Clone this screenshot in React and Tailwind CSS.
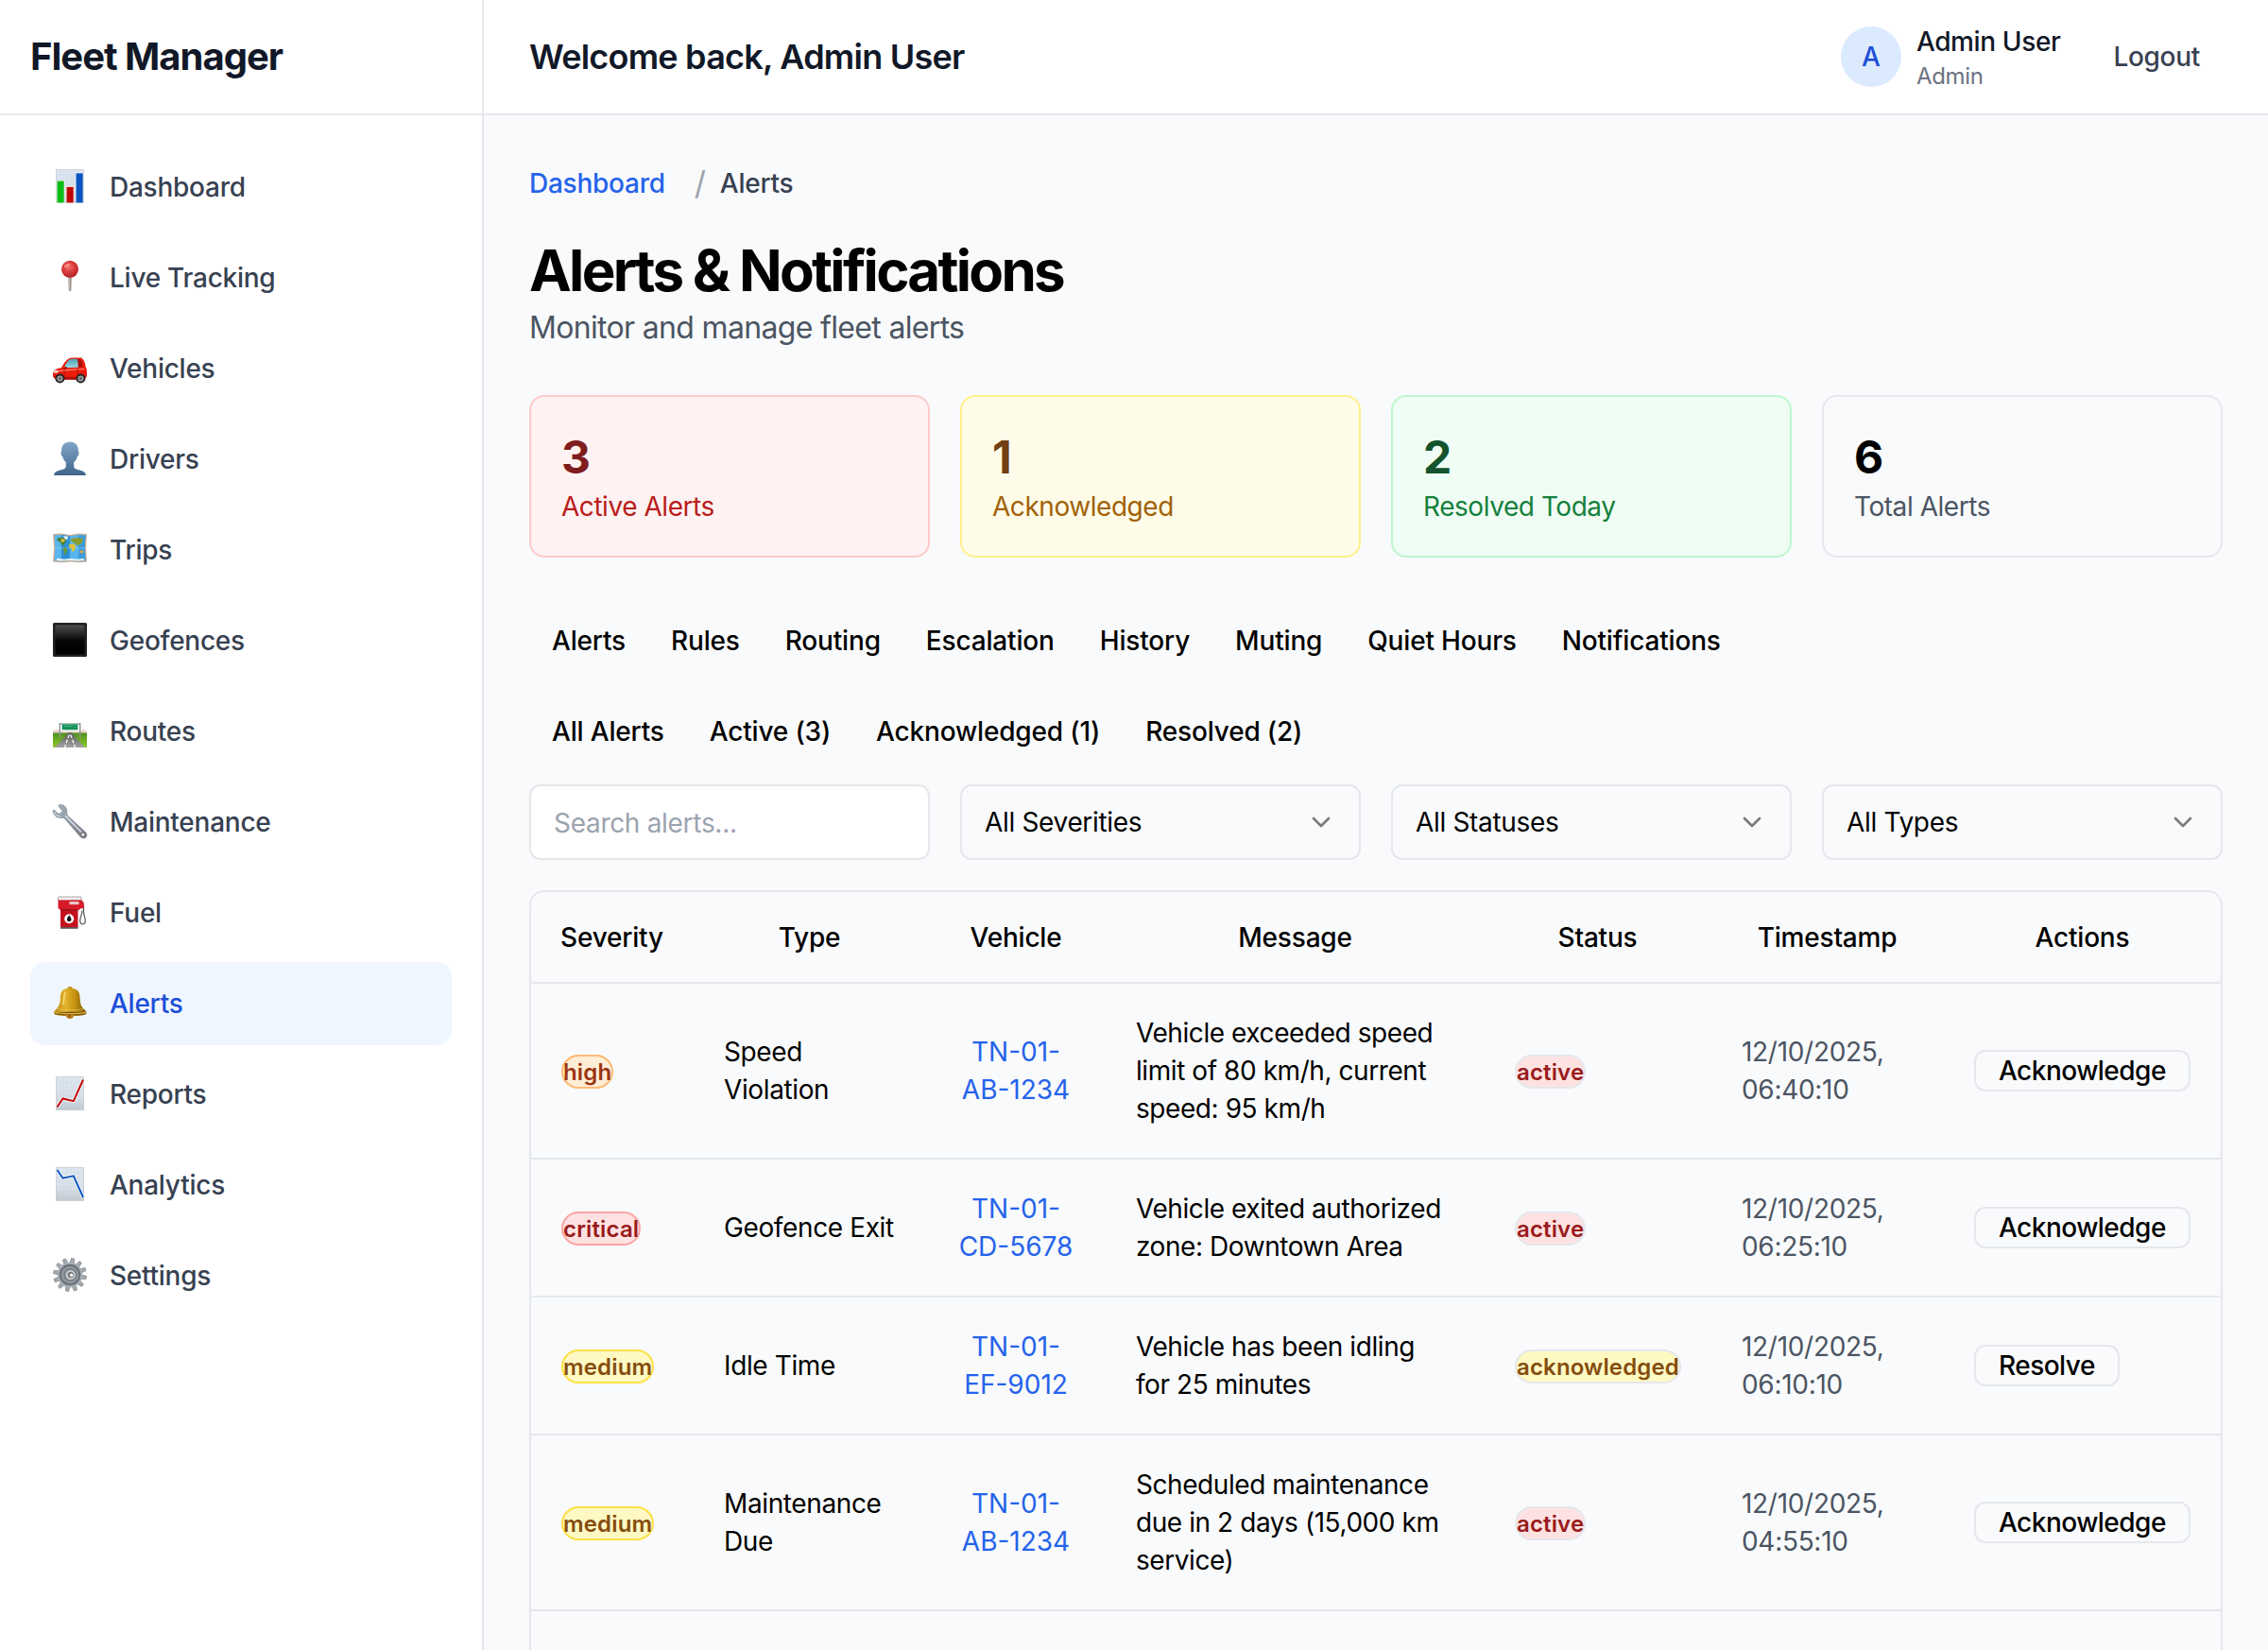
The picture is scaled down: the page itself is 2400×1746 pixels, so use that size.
import React from "react";

function Icon({ children }) {
  return (
    <svg viewBox="0 0 36 36" className="mb-0.5 h-9 w-9 shrink-0 overflow-visible">
      {children}
    </svg>
  );
}

function Paper({ id }) {
  return (
    <>
      <defs>
        <linearGradient id={id} x1="0" y1="0" x2="0" y2="1">
          <stop offset="0" stopColor="#dde7f0" />
          <stop offset="0.6" stopColor="#d9e1e9" />
          <stop offset="1" stopColor="#c3c9cf" />
        </linearGradient>
      </defs>
      <rect x="3" y="0.3" width="30" height="35.4" fill={`url(#${id})`} />
      <path d="M3.5 0.5h29v35h-29z" fill="none" stroke="#c5ccd3" strokeWidth="0.8" />
      <path d="M7 1v34M11 1v34M15 1v34M19 1v34M23 1v34M27 1v34M4 6h28M4 11h28M4 16h28M4 21h28M4 26h28M4 31h28" stroke="#b8c8d8" strokeWidth="0.3" opacity="0.6" />
    </>
  );
}

function BarChartIcon() {
  return (
    <Icon>
      <Paper id="paperBars" />
      <rect x="3.8" y="11.8" width="8.6" height="24" fill="#fff" />
      <rect x="13.8" y="18" width="8.6" height="18" fill="#fff" />
      <rect x="23.8" y="3.6" width="8.6" height="32" fill="#fff" />
      <rect x="4.5" y="12.5" width="7.2" height="23" fill="#0dbb14" />
      <rect x="14.5" y="18.8" width="7.2" height="16.7" fill="#bd0606" />
      <rect x="24.5" y="4.3" width="7.2" height="31.2" fill="#0a55c0" />
    </Icon>
  );
}

function PinIcon() {
  return (
    <Icon>
      <defs>
        <radialGradient id="pinHead" cx="0.45" cy="0.4" r="0.6">
          <stop offset="0" stopColor="#f26a62" />
          <stop offset="0.55" stopColor="#dc3a3a" />
          <stop offset="1" stopColor="#b41c22" />
        </radialGradient>
      </defs>
      <path d="M16.2 16h3.6l-.5 16.5q-1.3 1.6-2.6 0z" fill="#9c8d87" />
      <path d="M17.5 17v15" stroke="#c9bfba" strokeWidth="0.9" />
      <circle cx="18" cy="9.8" r="9" fill="url(#pinHead)" />
      <ellipse cx="15" cy="6" rx="3.4" ry="2" fill="#f79c94" opacity="0.7" transform="rotate(-30 15 6)" />
      <path d="M16.6 11h2.8v6h-2.8z" fill="#a04040" opacity="0.5" />
    </Icon>
  );
}

function CarIcon() {
  return (
    <Icon>
      <defs>
        <linearGradient id="carGlass" x1="0" y1="0" x2="0" y2="1">
          <stop offset="0" stopColor="#4f9fae" />
          <stop offset="1" stopColor="#9bdbe4" />
        </linearGradient>
      </defs>
      <path d="M29 9l1.5-2.4" stroke="#666" strokeWidth="0.8" />
      <path d="M0 25.5C0 21 3.6 18.6 9 18.2C11.5 13.5 14.5 7.4 21 7.4h6.5c5 0 6.6 4.6 7.2 10.1C35.8 19 36 21 36 25.500c0 3-1.800 4.500-4.500 5H5C2 30.500 0 29 0 25.500z" fill="#ec1c0e" />
      <path d="M12 18.200C14 13 16.500 8.800 20.500 8.800h5.200c.9 3 1.200 6 1 9z" fill="url(#carGlass)" />
      <path d="M26.300 9h2.500c1.500 1 2.600 4.300 3 8l-5 .8c.2-3 .1-6-.5-8.800z" fill="#a90e0a" />
      <path d="M2.500 22.500C9 20 20 20.500 33 19.500" stroke="#ff8a70" strokeWidth="1.200" fill="none" />
      <path d="M12 19v10M26.500 18.500l-.5 8" stroke="#a30c06" strokeWidth="0.700" />
      <ellipse cx="3.200" cy="22.300" rx="2.300" ry="1.500" fill="#f7e3d8" />
      <path d="M.3 27.500L34 28.300l-2.500 2.500H5z" fill="#aa0f08" />
      <ellipse cx="13.500" cy="18.500" rx="1.700" ry="1.400" fill="#a90e0a" />
      {[7.4, 29.4].map((x) => (
        <g key={x}>
          <circle cx={x} cy="29.500" r="5" fill="#2b2424" />
          <circle cx={x} cy="29.500" r="3.100" fill="#9c9c9c" />
          <circle cx={x} cy="29.500" r="1.300" fill="#555" />
        </g>
      ))}
    </Icon>
  );
}

function PersonIcon() {
  return (
    <Icon>
      <defs>
        <linearGradient id="bust" x1="0" y1="0" x2="0" y2="1">
          <stop offset="0" stopColor="#7fa6c8" />
          <stop offset="1" stopColor="#42658c" />
        </linearGradient>
      </defs>
      <path d="M18 .5c5.600 0 8.900 3.900 8.900 9.300 0 1 .9 1.700.5 3.700-.3 1.500-1 2.100-1.500 2.300-.6 3-2.200 5.200-3.700 6.500v4c0 3.500 4.500 3.600 8.500 5 3 1 4 2.500 4.300 4.700H1c.3-2.200 1.300-3.700 4.300-4.700 4-1.400 8.500-1.500 8.500-5v-4c-1.500-1.300-3.100-3.500-3.700-6.500-.5-.2-1.200-.8-1.500-2.300-.4-2 .5-2.700.5-3.700C9.100 4.400 12.400.5 18 .5z" fill="url(#bust)" />
    </Icon>
  );
}

function MapIcon() {
  return (
    <Icon>
      <path d="M0 2l9-.5 9 1.500 9-1.500 9 .5-1 15 1 14.500-9 .7-9-.7-9 .7-9-.7 1-14.500z" fill="#c9ae98" />
      <path d="M1.500 3.500L9 3l9 1.200L27 3l7.500.5-.8 13.500.8 13-7.500.6-9-.6-9 .6-7.500-.6.8-13z" fill="#58b6ee" />
      <path d="M9 3l9 1.200v25.800l-9 .6z" fill="#2f8fd0" />
      <path d="M27 3l7.500.5-.8 13.500.8 13-7.500.6z" fill="#3d9bd9" />
      <path d="M2 17h32" stroke="#8fd0f5" strokeWidth="0.700" />
      <path d="M3.500 8l4-2.500 5 1.500 1.500 2.500-3 4-1.500.5-2-3.500z" fill="#3f7a2a" />
      <path d="M8 7l5 .5-1 3-3 1z" fill="#c9b73a" />
      <path d="M11 16l4 1.500-.5 3.500-2 3-1-3z" fill="#6b9a2e" />
      <path d="M10.500 4.500l5-.3.500 2.500-2 1.500z" fill="#e8f2f8" />
      <path d="M18 9l3-2.500 6-.5 5 1.500-1 3-2.500 3-3 .5-1.500-2z" fill="#8b9c2b" />
      <path d="M17 13l5-.8 2.500 2.500-2 5-1.800 1.500-1.200-4-2.500-1.500z" fill="#e0c23c" />
      <path d="M28.500 20l3-.8 1 2-2 1.300-2-.6z" fill="#e8a43c" />
      <path d="M4 27.800l8 1 6-.8 8 .8 7-.8-.1 2-5.900.5-9-.5-9 .6-5-.5z" fill="#eaf5fb" />
    </Icon>
  );
}

function SquareIcon() {
  return (
    <Icon>
      <defs>
        <linearGradient id="blackGloss" x1="0" y1="0" x2="0" y2="1">
          <stop offset="0" stopColor="#4c4c4c" />
          <stop offset="0.55" stopColor="#050505" />
          <stop offset="1" stopColor="#000" />
        </linearGradient>
      </defs>
      <rect x="0" y="0" width="36" height="36" rx="1.500" fill="#20221f" />
      <rect x="2.500" y="2.500" width="31" height="31" rx="0.500" fill="url(#blackGloss)" />
    </Icon>
  );
}

function RoadIcon() {
  return (
    <Icon>
      <defs>
        <linearGradient id="grass" x1="0" y1="0" x2="0" y2="1">
          <stop offset="0" stopColor="#4f8f1f" />
          <stop offset="1" stopColor="#8ccb2c" />
        </linearGradient>
        <linearGradient id="asphalt" x1="0" y1="0" x2="0" y2="1">
          <stop offset="0" stopColor="#5a5a5a" />
          <stop offset="1" stopColor="#a3a3a3" />
        </linearGradient>
      </defs>
      <path d="M0 21v-2.500l4-1.500 6 2 8-.5 9 .5 5-2 4 1.500V21z" fill="#e6d3cf" />
      <rect x="0" y="20.500" width="36" height="15.500" fill="url(#grass)" />
      <path d="M16.500 20.500h3L34 36H2z" fill="url(#asphalt)" />
      <path d="M17.200 22.500L12.500 36M18.800 22.500L23.500 36" stroke="#fff" strokeWidth="1.300" strokeDasharray="3.600 2" />
      <path d="M6.500 11h23M7.300 11v14.500M28.700 11v14.500" stroke="#8f9494" strokeWidth="1.400" fill="none" />
      <rect x="9.500" y="11" width="17" height="6.500" rx="0.500" fill="#14915a" stroke="#c4e5d4" strokeWidth="0.700" />
      <path d="M12 13.300h9M22.500 15.500l1.500-2.300" stroke="#4fc08c" strokeWidth="0.900" />
    </Icon>
  );
}

function WrenchIcon() {
  return (
    <Icon>
      <defs>
        <linearGradient id="steel" x1="0" y1="0" x2="1" y2="1">
          <stop offset="0" stopColor="#a9b4bf" />
          <stop offset="0.5" stopColor="#8e98a5" />
          <stop offset="1" stopColor="#77727a" />
        </linearGradient>
      </defs>
      <path d="M6.800.8C10.500-.2 15 2.500 14.800 8c0 1.800-.4 2.600.6 3.900L33.600 28.800c3 2.600 2.600 5.400.9 6.600-1.800 1.200-4.400.8-6-1.600L12.600 15.400c-1.200-1.300-2-1.100-3.700-1C4 14.800.4 11.300.1 7.200c0-1.300.8-1.500 1.600-.8l3.600 3.400c.5.500 1.200.5 1.900.1l2.200-1.700c.7-.6.7-1.300.2-1.900L6.300 2.700C5.700 2 5.900 1 6.800.8z" fill="url(#steel)" stroke="#6f7884" strokeWidth="0.600" />
      <path d="M13 12l17 17.500" stroke="#d9e0e7" strokeWidth="1.600" />
      <path d="M1 8c.8 3 4 5.200 7.500 5" stroke="#dce3ea" strokeWidth="1" fill="none" />
      <circle cx="31.800" cy="32.300" r="1.700" fill="#fff" stroke="#5f5d63" strokeWidth="0.500" />
    </Icon>
  );
}

function FuelIcon() {
  return (
    <Icon>
      <path d="M29.500 8l3 2v8c0 3 1.700 6 1.800 9 .1 5-5.300 5-5.600.5-.2-4 2.500-7 2.200-11" stroke="#565656" strokeWidth="1.200" fill="none" />
      <path d="M29.500 5l3 2.500.6 6.500-3 .5z" fill="#d32531" />
      <rect x="5.500" y="2" width="24.500" height="4" rx="0.600" fill="#f2efee" stroke="#8b8583" strokeWidth="0.700" />
      <path d="M5.500 5.500h24.500V14l-2.500 2H8l-2.500-2z" fill="#d61a28" />
      <rect x="17.500" y="7" width="10" height="3.200" fill="#e9c8c8" />
      <rect x="8" y="16" width="18.500" height="18.500" fill="#c5121f" />
      <path d="M8 16h18.500" stroke="#7d0c14" strokeWidth="1" />
      <rect x="8" y="34" width="18.500" height="1.800" fill="#5c5653" />
      <circle cx="17.200" cy="25.200" r="5" fill="#fff" />
      <path d="M17.200 21.300c1 1.700 2.300 3 2.300 4.700 0 3-4.600 3-4.600 0 0-1.700 1.300-3 2.300-4.700z" fill="#151515" />
    </Icon>
  );
}

function BellIcon() {
  return (
    <Icon>
      <defs>
        <linearGradient id="brass" x1="0" y1="0" x2="1" y2="0">
          <stop offset="0" stopColor="#b98310" />
          <stop offset="0.35" stopColor="#e3b52c" />
          <stop offset="0.65" stopColor="#c4900f" />
          <stop offset="1" stopColor="#7d5606" />
        </linearGradient>
      </defs>
      <ellipse cx="18" cy="2.600" rx="2.600" ry="1.700" fill="#b5860f" />
      <circle cx="18" cy="30.500" r="4.500" fill="#b5741a" />
      <path d="M18 2.500c7 0 10.300 3.500 10.500 9 .2 6 .8 9.500 3.500 12.500 1.700 1.800 3.600 3 3.600 5 0 2.500-7.600 3-17.600 3S1 31.500 1 29c0-2 1.600-3.200 3.300-5 2.700-3 3.500-6.500 3.600-12.500C8.100 6 11 2.500 18 2.500z" fill="url(#brass)" />
      <path d="M4 24.500c7 2 20 2 28 0" stroke="#e9c95a" strokeWidth="1" fill="none" opacity="0.700" />
      <ellipse cx="18" cy="29.600" rx="16.500" ry="1.900" fill="#7a5205" />
      <path d="M2 28.500c9 1.600 23 1.600 33 0" stroke="#f0d36a" strokeWidth="0.900" fill="none" />
      <path d="M13.700 30.500a4.300 4.300 0 008.600 0z" fill="#c98524" />
      <circle cx="17.500" cy="32" r="1.600" fill="#8a5410" />
      <path d="M13 7c-1.500 4-.8 9-2.500 13.500" stroke="#f6df87" strokeWidth="1.700" fill="none" opacity="0.800" />
    </Icon>
  );
}

function ChartUpIcon() {
  return (
    <Icon>
      <Paper id="paperUp" />
      <path d="M4.500 32.500L10.500 23.500L21.800 26.200L32 3.500" stroke="#fff" strokeWidth="3.400" fill="none" />
      <path d="M4.500 32.500L10.500 23.500L21.800 26.200L32 3.500" stroke="#bd0606" strokeWidth="2" fill="none" />
    </Icon>
  );
}

function ChartDownIcon() {
  return (
    <Icon>
      <Paper id="paperDown" />
      <path d="M4.500 3L10.500 11.700L21.800 9.300L32 32" stroke="#fff" strokeWidth="3.400" fill="none" />
      <path d="M4.500 3L10.500 11.700L21.800 9.300L32 32" stroke="#0a55c0" strokeWidth="2" fill="none" />
    </Icon>
  );
}

function GearIcon() {
  return (
    <Icon>
      {Array.from({ length: 12 }, (_, i) => (
        <path key={i} d="M15.800 6.500l.6-6h3.200l.6 6z" fill="#a3abb2" stroke="#6b6664" strokeWidth="0.500" transform={`rotate(${i * 30 + 10} 18 18)`} />
      ))}
      <circle cx="18" cy="18" r="13.300" fill="#a9b1b8" />
      <circle cx="18" cy="18" r="11.300" fill="#6a7178" />
      <circle cx="18" cy="18" r="9.300" fill="#8f979e" />
      <circle cx="18.300" cy="18" r="6.800" fill="#747b83" />
      <circle cx="18.600" cy="18" r="5.300" fill="#c0c7cd" />
      <circle cx="18.800" cy="18" r="3" fill="#6d6a6b" />
      <circle cx="19.500" cy="18.200" r="1.700" fill="#fff" />
    </Icon>
  );
}

const nav = [
  ["Dashboard", BarChartIcon],
  ["Live Tracking", PinIcon],
  ["Vehicles", CarIcon],
  ["Drivers", PersonIcon],
  ["Trips", MapIcon],
  ["Geofences", SquareIcon],
  ["Routes", RoadIcon],
  ["Maintenance", WrenchIcon],
  ["Fuel", FuelIcon],
  ["Alerts", BellIcon],
  ["Reports", ChartUpIcon],
  ["Analytics", ChartDownIcon],
  ["Settings", GearIcon],
];

const stats = [
  ["3", "Active Alerts", "border-[#fecaca] bg-[#fef2f2]", "text-[#7f1d1d]", "text-[#b91c1c]"],
  ["1", "Acknowledged", "border-[#fef08a] bg-[#fefce8]", "text-[#713f12]", "text-[#a16207]"],
  ["2", "Resolved Today", "border-[#bbf7d0] bg-[#f0fdf4]", "text-[#14532d]", "text-[#15803d]"],
  ["6", "Total Alerts", "border-[#e5e7eb]", "text-black", "text-[#4b5563]"],
];

const severityStyle = {
  high: "border-[#fdba74] bg-[#ffedd5] text-[#9a3412]",
  critical: "border-[#fca5a5] bg-[#fee2e2] text-[#991b1b]",
  medium: "border-[#fde047] bg-[#fef9c3] text-[#854d0e]",
};
const statusStyle = {
  active: "border-[#e5e7eb] bg-[#fee2e2] text-[#991b1b]",
  acknowledged: "border-[#e5e7eb] bg-[#fef9c3] text-[#854d0e]",
};

const rows = [
  { h: "h-[186px]", sev: "high", type: ["Speed", "Violation"], veh: "AB-1234", msg: ["Vehicle exceeded speed", "limit of 80 km/h, current", "speed: 95 km/h"], st: "active", time: "06:40:10", act: "Acknowledge" },
  { h: "h-[146px]", sev: "critical", type: ["Geofence Exit"], veh: "CD-5678", msg: ["Vehicle exited authorized", "zone: Downtown Area"], st: "active", time: "06:25:10", act: "Acknowledge" },
  { h: "h-[146px]", sev: "medium", type: ["Idle Time"], veh: "EF-9012", msg: ["Vehicle has been idling", "for 25 minutes"], st: "acknowledged", time: "06:10:10", act: "Resolve" },
  { h: "h-[186px]", sev: "medium", type: ["Maintenance", "Due"], veh: "AB-1234", msg: ["Scheduled maintenance", "due in 2 days (15,000 km", "service)"], st: "active", time: "04:55:10", act: "Acknowledge" },
];

const columns = "grid grid-cols-[171px_247px_190px_401px_239px_247px_293px] items-center border-b-2 border-[#e5e7eb]";

function Lines({ lines }) {
  return lines.map((line) => (
    <div key={line} className="whitespace-nowrap">{line}</div>
  ));
}

function Badge({ className, children }) {
  return (
    <span className={`mt-0.5 inline-flex h-9 items-center rounded-full border-2 pt-px text-2xl font-semibold tracking-[0.15px] whitespace-nowrap ${className}`}>
      {children}
    </span>
  );
}

function Select({ children }) {
  return (
    <button className="flex h-20 items-center justify-between rounded-xl border-2 border-[#e5e7eb] px-6 font-normal tracking-[-0.33px]">
      <span>{children}</span>
      <svg viewBox="0 0 24 24" className="h-8 w-8 opacity-50" fill="none" stroke="black" strokeWidth="2" strokeLinecap="round" strokeLinejoin="round">
        <path d="m6 9 6 6 6-6" />
      </svg>
    </button>
  );
}

function Tabs({ items }) {
  return (
    <div className="flex h-16 items-center font-medium tracking-[-0.17px]">
      {items.map((t) => (
        <button key={t} className="px-6 whitespace-nowrap">{t}</button>
      ))}
    </div>
  );
}

export default function App() {
  return (
    <div className="flex h-[1746px] w-[2400px] overflow-hidden bg-[#f9fafb] font-['Inter',sans-serif] text-[28px] leading-10 text-black">
      <aside className="w-[512px] shrink-0 border-r-2 border-[#e5e7eb] bg-white">
        <div className="flex h-[122px] items-center border-b-2 border-[#e5e7eb] px-8">
          <h1 className="text-[40px] font-bold tracking-tight text-[#111827]">Fleet Manager</h1>
        </div>
        <nav className="flex flex-col gap-2 px-8 pt-8 tracking-[-0.25px]">
          {nav.map(([label, NavIcon]) => (
            <a
              key={label}
              className={
                label === "Alerts"
                  ? "flex h-[88px] items-center gap-6 rounded-2xl bg-[#eff6ff] px-6 font-medium text-[#1d4ed8]"
                  : "flex h-[88px] items-center gap-6 rounded-2xl px-6 font-medium text-[#374151]"
              }
            >
              <NavIcon />
              <span>{label}</span>
            </a>
          ))}
        </nav>
      </aside>

      <div className="flex min-w-0 flex-1 flex-col">
        <header className="flex h-[122px] shrink-0 items-center justify-between border-b-2 border-[#e5e7eb] bg-white px-12">
          <h2 className="text-4xl font-semibold tracking-[-0.77px] text-[#111827]">Welcome back, Admin User</h2>
          <div className="flex items-center gap-8">
            <div className="flex items-center gap-4">
              <div className="flex h-16 w-16 items-center justify-center rounded-full bg-[#dbeafe] font-medium text-[#1d4ed8]">A</div>
              <div>
                <div className="font-medium tracking-[-0.38px] text-[#111827]">Admin User</div>
                <div className="pt-px text-2xl leading-8 tracking-[-0.3px] text-[#6b7280]">Admin</div>
              </div>
            </div>
            <button className="px-6 font-medium tracking-[-0.3px] text-[#374151]">Logout</button>
          </div>
        </header>

        <main className="px-12 pt-[52px]">
          <div className="flex h-10 items-center font-medium tracking-[-0.25px]">
            <a className="text-[#2563eb]">Dashboard</a>
            <span className="mr-[15px] ml-[31px] text-[34px] font-normal text-[#9ca3af]">/</span>
            <span className="text-[#374151]">Alerts</span>
          </div>

          <h1 className="mt-9 text-[60px] leading-[72px] font-bold tracking-[-2.7px]">Alerts &amp; Notifications</h1>
          <p className="pt-px text-[32px] leading-[48px] tracking-[-0.67px] text-[#4b5563]">Monitor and manage fleet alerts</p>

          <section className="mt-[47px] grid grid-cols-4 gap-8">
            {stats.map(([value, label, box, strong, soft]) => (
              <div key={label} className={`h-[172px] rounded-2xl border-2 p-8 tracking-[-0.45px] ${box}`}>
                <div className={`text-5xl leading-[64px] font-bold ${strong}`}>{value}</div>
                <div className={soft}>{label}</div>
              </div>
            ))}
          </section>

          <div className="mt-14 flex flex-col gap-8">
            <Tabs items={["Alerts", "Rules", "Routing", "Escalation", "History", "Muting", "Quiet Hours", "Notifications"]} />
            <Tabs items={["All Alerts", "Active (3)", "Acknowledged (1)", "Resolved (2)"]} />
          </div>

          <div className="mt-6 grid grid-cols-4 gap-8">
            <input
              className="h-20 min-w-0 rounded-xl border-2 border-[#e5e7eb] bg-white px-6 pt-0.5 tracking-[-0.3px] placeholder:text-[#9ca3af]"
              placeholder="Search alerts..."
            />
            <Select>All Severities</Select>
            <Select>All Statuses</Select>
            <Select>All Types</Select>
          </div>

          <div className="mt-8 h-[900px] rounded-2xl border-2 border-[#e5e7eb]">
            <div className={`h-[97px] text-center font-medium tracking-[-0.2px] ${columns}`}>
              {["Severity", "Type", "Vehicle", "Message", "Status", "Timestamp", "Actions"].map((h) => (
                <div key={h}>{h}</div>
              ))}
            </div>
            {rows.map((r) => (
              <div key={r.time} className={`${r.h} ${columns}`}>
                <div className="flex px-8">
                  <Badge className={severityStyle[r.sev]}>{r.sev}</Badge>
                </div>
                <div className="pl-[33px] tracking-[-0.38px]"><Lines lines={r.type} /></div>
                <div className="text-center text-[#2563eb]"><Lines lines={["TN-01-", r.veh]} /></div>
                <div className="pl-8 tracking-[-0.43px]"><Lines lines={r.msg} /></div>
                <div className="flex px-8">
                  <Badge className={statusStyle[r.st]}>{r.st}</Badge>
                </div>
                <div className="pl-[33px] tracking-[-0.3px] text-[#4b5563]"><Lines lines={["12/10/2025,", r.time]} /></div>
                <div className="flex px-8">
                  <button className="flex h-11 items-center rounded-xl border-2 border-[#e5e7eb] px-6 font-medium tracking-[-0.52px]">{r.act}</button>
                </div>
              </div>
            ))}
          </div>
        </main>
      </div>
    </div>
  );
}
